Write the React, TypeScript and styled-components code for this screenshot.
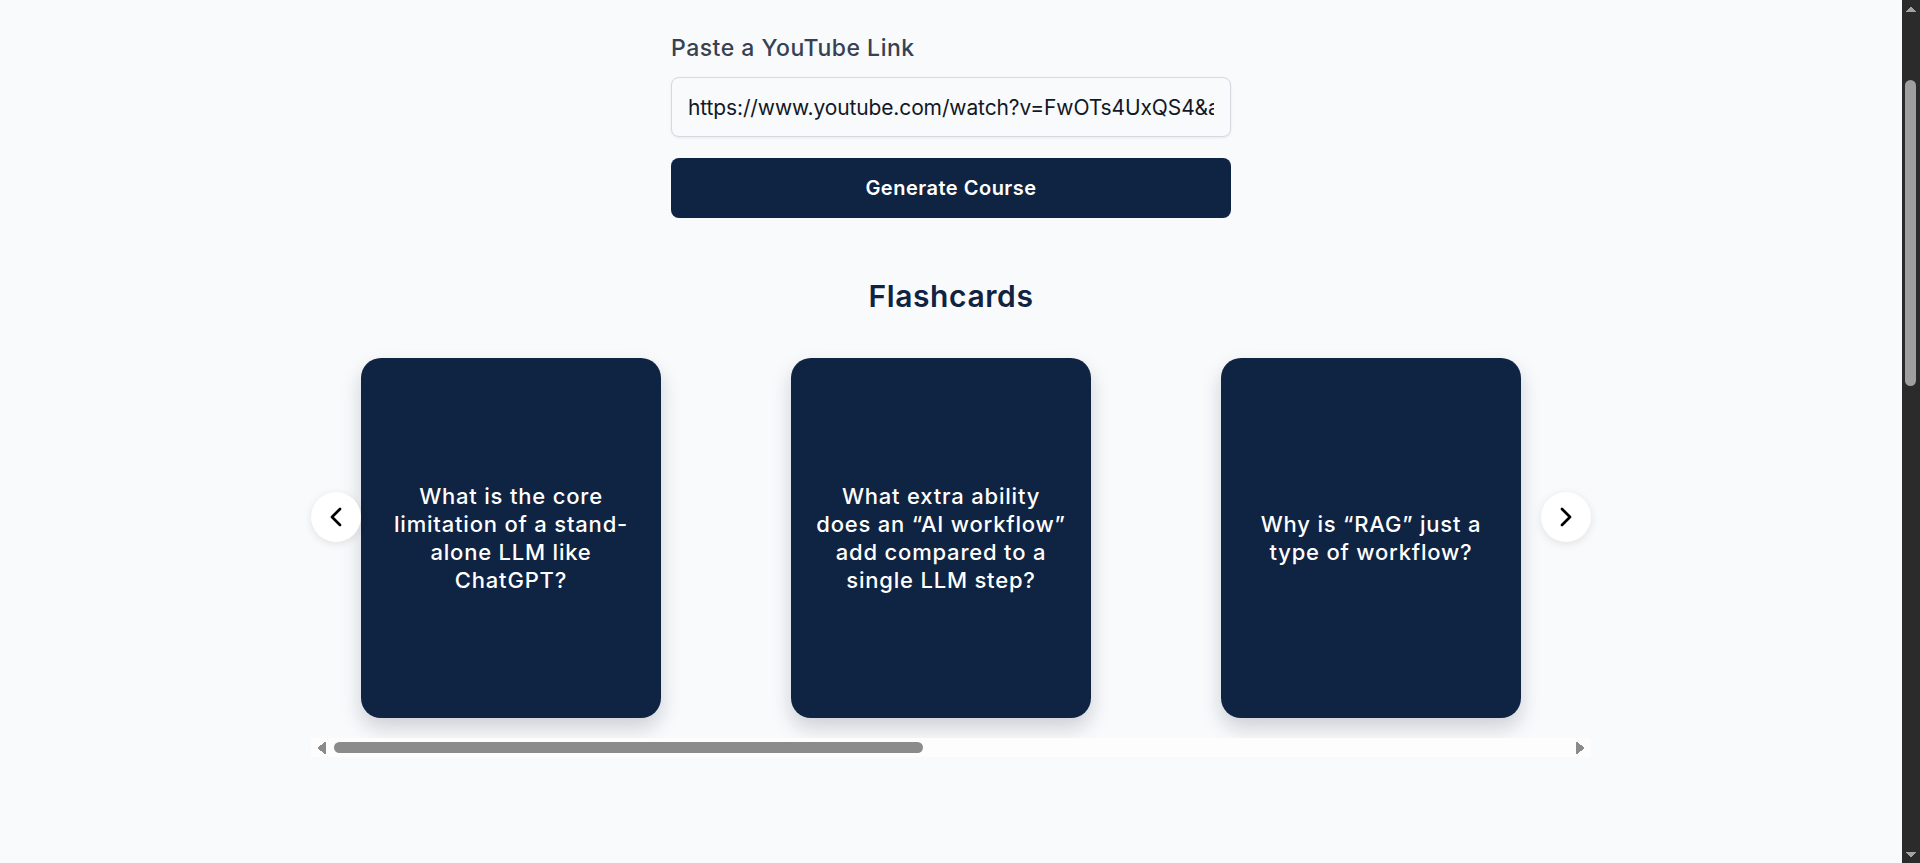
import { useLayoutEffect, useRef, useState } from "react";
import styled, { createGlobalStyle } from "styled-components";
import { ChevronLeft, ChevronRight } from "lucide-react";

const NAVY = "#0f2342";

const GlobalStyle = createGlobalStyle`
  html, body {
    margin: 0;
    background: #f8fafc;
    font-family: Inter, "Noto Sans", sans-serif;
  }
`;

const Shell = styled.div`
  display: flex;
  height: 100vh;
  overflow: hidden;
`;

const Page = styled.main`
  flex: 1;
  box-sizing: border-box;
  padding-top: 34px;
  display: flex;
  flex-direction: column;
  align-items: center;
`;

/* dark page scroll rail on the right edge */
const PageRail = styled.div`
  flex: 0 0 18px;
  display: flex;
  flex-direction: column;
  background: #2b2b2b;
`;

const RailButton = styled.div<{ $dir: "up" | "down" }>`
  flex: 0 0 17px;
  background-repeat: no-repeat;
  background-position: center;
  background-size: 10px 6px;
  background-image: ${(p) =>
    p.$dir === "up"
      ? "conic-gradient(from 140deg at 50% 0, #a3a3a3 80deg, transparent 0)"
      : "conic-gradient(from -40deg at 50% 100%, #a3a3a3 80deg, transparent 0)"};
`;

const RailTrack = styled.div`
  flex: 1;
  padding: 63px 4px 0 3px;
`;

const RailThumb = styled.div`
  height: 306px;
  border-radius: 6px;
  background: #9f9f9f;
`;

const Form = styled.div`
  width: 560px;
  display: flex;
  flex-direction: column;
`;

const Label = styled.label`
  font-size: 23px;
  line-height: 28px;
  font-weight: 500;
  letter-spacing: 0.5px;
  color: #374151;
  margin-bottom: 15px;
`;

const UrlInput = styled.input`
  box-sizing: border-box;
  width: 100%;
  height: 60px;
  padding: 0 16px;
  border: 1px solid #d5d9e0;
  border-radius: 8px;
  background: #f9fafb;
  box-shadow: 0 1px 3px rgba(0, 0, 0, 0.08);
  font-family: inherit;
  font-size: 21px;
  letter-spacing: -0.12px;
  color: #111827;
  outline: none;
`;

const GenerateButton = styled.button`
  margin-top: 21px;
  height: 60px;
  border: none;
  border-radius: 8px;
  background: ${NAVY};
  color: #fff;
  font-family: inherit;
  font-size: 20px;
  font-weight: 600;
  letter-spacing: 0.5px;
  cursor: pointer;
`;

const Heading = styled.h2`
  margin: 60px 0 24px;
  font-size: 30px;
  line-height: 36px;
  font-weight: 600;
  letter-spacing: 0.6px;
  color: ${NAVY};
  text-align: center;
`;

const Carousel = styled.div`
  position: relative;
  width: 1280px;
`;

const Track = styled.div`
  box-sizing: border-box;
  display: flex;
  overflow-x: auto;
  padding: 20px 50px;
  scrollbar-width: none;

  &::-webkit-scrollbar {
    display: none;
  }
`;

const Card = styled.div`
  box-sizing: border-box;
  flex: 0 0 300px;
  height: 360px;
  margin-right: 130px;
  padding: 0 24px;
  display: flex;
  align-items: center;
  justify-content: center;
  border-radius: 20px;
  background: ${NAVY};
  box-shadow: 0 10px 20px rgba(15, 23, 42, 0.18);
  color: #fff;
  font-size: 22px;
  line-height: 28px;
  font-weight: 500;
  letter-spacing: 0.8px;
  text-align: center;
`;

const Arrow = styled.button<{ $side: "left" | "right" }>`
  position: absolute;
  top: 154px;
  ${(p) => (p.$side === "left" ? "left: 0;" : "right: 0;")}
  width: 50px;
  height: 50px;
  padding: 0;
  border: none;
  border-radius: 50%;
  background: #fff;
  box-shadow: 0 2px 8px rgba(0, 0, 0, 0.1);
  display: flex;
  align-items: center;
  justify-content: center;
  color: #000;
  cursor: pointer;
`;

const ScrollBar = styled.div`
  display: flex;
  height: 19px;
  background: #fdfdfd;
`;

const BarButton = styled.div<{ $dir: "left" | "right" }>`
  flex: 0 0 21px;
  background-repeat: no-repeat;
  background-position: center;
  background-size: 9px 12px;
  background-image: ${(p) =>
    p.$dir === "left"
      ? "conic-gradient(from 53deg at 0 50%, #8b8b8b 74deg, transparent 0)"
      : "conic-gradient(from 233deg at 100% 50%, #8b8b8b 74deg, transparent 0)"};
`;

const BarRail = styled.div`
  flex: 1;
  display: flex;
  align-items: center;
  padding: 0 2px;
`;

const BarThumb = styled.div`
  height: 11px;
  border-radius: 6px;
  background: #8b8b8b;
`;

const questions = [
  "What is the core limitation of a stand-alone LLM like ChatGPT?",
  "What extra ability does an \u201cAI workflow\u201d add compared to a single LLM step?",
  "Why is \u201cRAG\u201d just a type of workflow?",
  "What makes an AI agent different from a fixed workflow?",
  "What does the ReAct framework combine?",
  "Who makes the decisions in an AI agent?",
];

function Flashcards() {
  const trackRef = useRef<HTMLDivElement>(null);
  const [bar, setBar] = useState({ size: 0.48, offset: 0 });

  useLayoutEffect(() => {
    const el = trackRef.current;
    if (!el) return;
    const update = () =>
      setBar({
        size: el.clientWidth / el.scrollWidth,
        offset: el.scrollLeft / el.scrollWidth,
      });
    update();
    el.addEventListener("scroll", update);
    return () => el.removeEventListener("scroll", update);
  }, []);

  const slide = (dir: number) =>
    trackRef.current?.scrollBy({ left: dir * 430, behavior: "smooth" });

  return (
    <>
      <Heading>Flashcards</Heading>
      <Carousel>
        <Track ref={trackRef}>
          {questions.map((q) => (
            <Card key={q}>{q}</Card>
          ))}
        </Track>
        <ScrollBar>
          <BarButton $dir="left" />
          <BarRail>
            <BarThumb
              style={{
                width: `${bar.size * 100}%`,
                marginLeft: `${bar.offset * 100}%`,
              }}
            />
          </BarRail>
          <BarButton $dir="right" />
        </ScrollBar>
        <Arrow $side="left" aria-label="Previous" onClick={() => slide(-1)}>
          <ChevronLeft size={32} strokeWidth={2} />
        </Arrow>
        <Arrow $side="right" aria-label="Next" onClick={() => slide(1)}>
          <ChevronRight size={32} strokeWidth={2} />
        </Arrow>
      </Carousel>
    </>
  );
}

export default function App() {
  return (
    <>
      <GlobalStyle />
      <Shell>
        <Page>
          <Form>
            <Label htmlFor="yt">Paste a YouTube Link</Label>
            <UrlInput
              id="yt"
              defaultValue="https://www.youtube.com/watch?v=FwOTs4UxQS4&ab_channel=TinaHuang"
            />
            <GenerateButton>Generate Course</GenerateButton>
          </Form>
          <Flashcards />
        </Page>
        <PageRail>
          <RailButton $dir="up" />
          <RailTrack>
            <RailThumb />
          </RailTrack>
          <RailButton $dir="down" />
        </PageRail>
      </Shell>
    </>
  );
}
